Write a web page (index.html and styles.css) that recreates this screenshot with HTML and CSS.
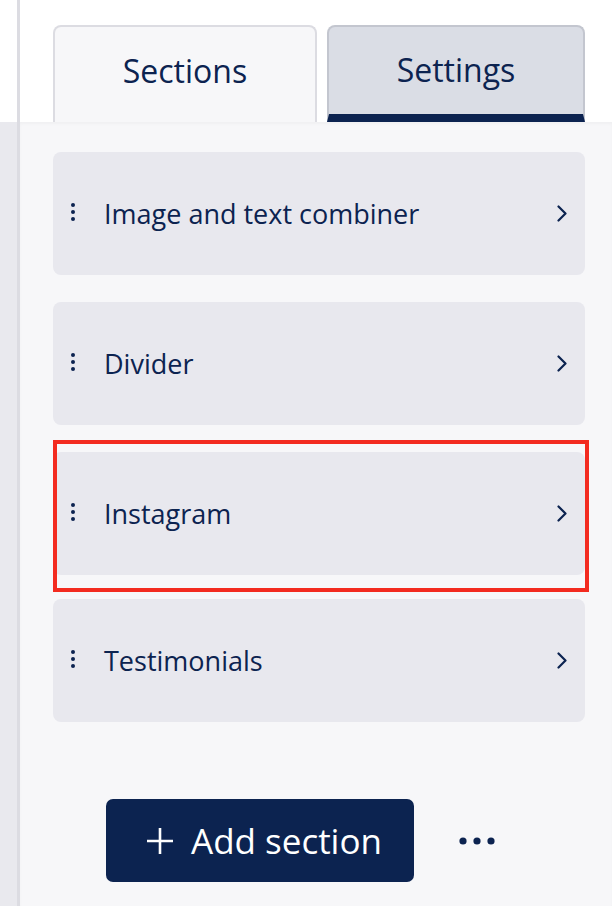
FILE: index.html
```html
<!DOCTYPE html>
<html lang="en">
<head>
    <meta charset="UTF-8">
    <meta name="viewport" content="width=device-width, initial-scale=1.0">
    <title>Sections</title>
    <link rel="stylesheet" href="styles.css">
</head>
<body>
    <div class="page">
        <div class="gutter">
            <div class="gutter-top"></div>
            <div class="gutter-bottom"></div>
        </div>

        <div class="panel">
            <div class="tabs">
                <button class="tab tab-sections">Sections</button>
                <button class="tab tab-settings">Settings</button>
            </div>

            <div class="content">
                <div class="section-list">
                    <div class="section-item">
                        <svg class="drag-handle" width="4" height="18" viewBox="0 0 4 18">
                            <circle cx="2" cy="2" r="2"/>
                            <circle cx="2" cy="9" r="2"/>
                            <circle cx="2" cy="16" r="2"/>
                        </svg>
                        <span class="section-name">Image and text combiner</span>
                        <svg class="chevron" width="10" height="17" viewBox="0 0 10 17">
                            <path d="M1.5 1.5 L8.5 8.5 L1.5 15.5"/>
                        </svg>
                    </div>

                    <div class="section-item">
                        <svg class="drag-handle" width="4" height="18" viewBox="0 0 4 18">
                            <circle cx="2" cy="2" r="2"/>
                            <circle cx="2" cy="9" r="2"/>
                            <circle cx="2" cy="16" r="2"/>
                        </svg>
                        <span class="section-name">Divider</span>
                        <svg class="chevron" width="10" height="17" viewBox="0 0 10 17">
                            <path d="M1.5 1.5 L8.5 8.5 L1.5 15.5"/>
                        </svg>
                    </div>

                    <div class="section-item is-highlighted">
                        <svg class="drag-handle" width="4" height="18" viewBox="0 0 4 18">
                            <circle cx="2" cy="2" r="2"/>
                            <circle cx="2" cy="9" r="2"/>
                            <circle cx="2" cy="16" r="2"/>
                        </svg>
                        <span class="section-name">Instagram</span>
                        <svg class="chevron" width="10" height="17" viewBox="0 0 10 17">
                            <path d="M1.5 1.5 L8.5 8.5 L1.5 15.5"/>
                        </svg>
                        <div class="highlight-box"></div>
                    </div>

                    <div class="section-item">
                        <svg class="drag-handle" width="4" height="18" viewBox="0 0 4 18">
                            <circle cx="2" cy="2" r="2"/>
                            <circle cx="2" cy="9" r="2"/>
                            <circle cx="2" cy="16" r="2"/>
                        </svg>
                        <span class="section-name">Testimonials</span>
                        <svg class="chevron" width="10" height="17" viewBox="0 0 10 17">
                            <path d="M1.5 1.5 L8.5 8.5 L1.5 15.5"/>
                        </svg>
                    </div>
                </div>

                <div class="actions">
                    <button class="add-button">
                        <svg class="plus-icon" width="28" height="28" viewBox="0 0 28 28">
                            <path d="M14 1 V27 M1 14 H27"/>
                        </svg>
                        <span>Add section</span>
                    </button>
                    <button class="more-button" aria-label="More">
                        <svg width="36" height="8" viewBox="0 0 36 8">
                            <circle cx="4" cy="4" r="3.6"/>
                            <circle cx="18" cy="4" r="3.6"/>
                            <circle cx="32" cy="4" r="3.6"/>
                        </svg>
                    </button>
                </div>
            </div>
        </div>
    </div>
</body>
</html>
```

FILE: styles.css
```css
body {
    margin: 0;
    font-family: 'Open Sans', 'Noto Sans', sans-serif;
    color: #0c2350;
    background-color: #fff;
}

.page {
    display: flex;
    width: 612px;
    height: 906px;
    overflow: hidden;
}

.gutter {
    display: flex;
    flex-direction: column;
    width: 17px;
    flex-shrink: 0;
}

.gutter-top {
    height: 122px;
    background-color: #fff;
}

.gutter-bottom {
    flex: 1;
    background-color: #e9e9ee;
}

.panel {
    flex: 1;
    display: flex;
    flex-direction: column;
    border-left: 3px solid #dcdce2;
}

.tabs {
    display: grid;
    grid-template-columns: 264px 1fr;
    gap: 10px;
    padding: 25px 27px 0 33px;
    height: 97px;
    background-color: #fff;
}

.tab {
    display: flex;
    justify-content: center;
    align-items: center;
    margin: 0;
    padding: 0 0 8px;
    font-family: inherit;
    font-size: 32px;
    color: #0c2350;
    border-radius: 8px 8px 0 0;
    cursor: pointer;
}

.tab-sections {
    background-color: #f7f7f9;
    border: 2px solid #dcdce2;
    border-bottom: none;
}

.tab-settings {
    background-color: #dadde5;
    border: 2px solid #c3c6cf;
    border-bottom: 8px solid #0c2350;
    padding-bottom: 2px;
}

.content {
    flex: 1;
    padding: 30px 27px 0 33px;
    background-color: #f7f7f9;
    box-shadow: inset 0 2px 3px rgba(0, 0, 0, 0.03);
}

.section-list {
    display: flex;
    flex-direction: column;
    gap: 27px;
}

.section-item {
    position: relative;
    display: flex;
    align-items: center;
    height: 123px;
    padding: 0 18px;
    background-color: #e8e8ee;
    border-radius: 8px;
}

.section-item:last-child {
    margin-top: -3px;
}

.drag-handle {
    fill: #0c2350;
    margin-top: -4px;
}

.section-name {
    flex: 1;
    margin-left: 29px;
    font-size: 27px;
}

.chevron {
    fill: none;
    stroke: #0c2350;
    stroke-width: 2.2;
    stroke-linecap: round;
    stroke-linejoin: round;
}

.highlight-box {
    position: absolute;
    top: -12px;
    left: 0;
    right: -4px;
    bottom: -17px;
    border: 4px solid #f32b20;
    pointer-events: none;
}

.actions {
    display: flex;
    align-items: center;
    margin-top: 77px;
    padding-left: 53px;
}

.add-button {
    display: flex;
    align-items: center;
    gap: 17px;
    height: 83px;
    padding: 0 32px 0 40px;
    border: none;
    border-radius: 7px;
    background-color: #0c2350;
    color: #fff;
    font-family: inherit;
    font-size: 35px;
    cursor: pointer;
}

.plus-icon {
    fill: none;
    stroke: #fff;
    stroke-width: 2.6;
}

.more-button {
    display: flex;
    margin-left: 45px;
    padding: 0;
    border: none;
    background: none;
    fill: #0c2350;
    cursor: pointer;
}
```
